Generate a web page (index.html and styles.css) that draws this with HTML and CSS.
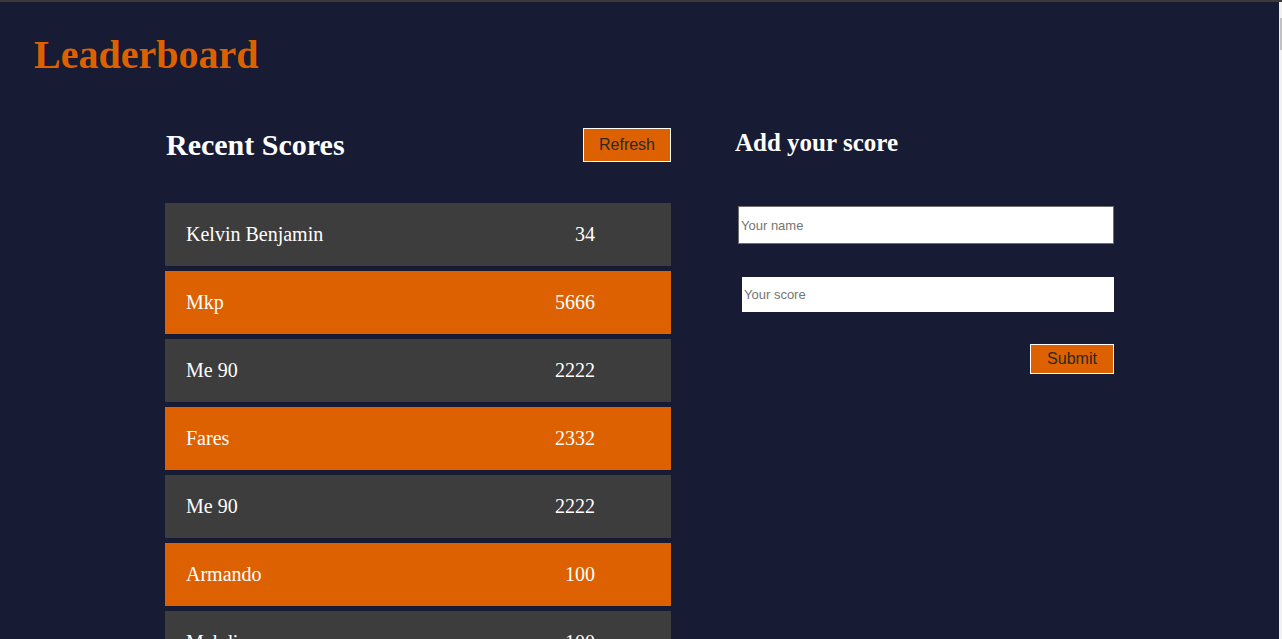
FILE: index.html
```html
<!DOCTYPE html>
<html lang="en">
<head>
<meta charset="utf-8">
<title>Leaderboard</title>
<link rel="stylesheet" href="styles.css">
</head>
<body>
<div class="page">
  <div class="content">
    <h1 class="title">Leaderboard</h1>
    <main class="board">
      <section class="scores">
        <div class="scores-head">
          <h2 class="scores-title">Recent Scores</h2>
          <button class="btn btn-refresh" type="button">Refresh</button>
        </div>
        <ul class="list">
          <li class="row row-gray"><span class="name">Kelvin Benjamin</span><span class="score">34</span></li>
          <li class="row row-orange"><span class="name">Mkp</span><span class="score">5666</span></li>
          <li class="row row-gray"><span class="name">Me 90</span><span class="score">2222</span></li>
          <li class="row row-orange"><span class="name">Fares</span><span class="score">2332</span></li>
          <li class="row row-gray"><span class="name">Me 90</span><span class="score">2222</span></li>
          <li class="row row-orange"><span class="name">Armando</span><span class="score">100</span></li>
          <li class="row row-gray"><span class="name">Mahdi</span><span class="score">100</span></li>
        </ul>
      </section>
      <section class="add">
        <h2 class="add-title">Add your score</h2>
        <form class="form">
          <input class="field field-name" type="text" placeholder="Your name">
          <input class="field field-score" type="text" placeholder="Your score">
          <div class="form-actions">
            <button class="btn btn-submit" type="button">Submit</button>
          </div>
        </form>
      </section>
    </main>
  </div>
  <div class="scrollbar"><div class="thumb"></div></div>
</div>
</body>
</html>
```

FILE: styles.css
```css
html, body {
  margin: 0;
  padding: 0;
  height: 100%;
  overflow: hidden;
}

body {
  background: #171b33;
  font-family: "Liberation Serif", "Times New Roman", serif;
  color: #ffffff;
}

.page {
  display: flex;
  height: 100%;
  border-top: 2px solid #3a3a3a;
  box-sizing: border-box;
}

.content {
  flex: 1;
  min-width: 0;
}

.scrollbar {
  width: 3px;
  background: #f1f1f1;
  display: flex;
  justify-content: flex-end;
}

.thumb {
  width: 2px;
  height: 32px;
  margin-top: 16px;
  background: #c1c1c1;
}

.title {
  margin: 30px 0 0 34px;
  font-size: 40px;
  line-height: 46px;
  font-weight: bold;
  color: #dd6100;
}

.board {
  width: 949px;
  margin: 50px auto 0;
  display: flex;
  gap: 64px;
}

.scores {
  width: 506px;
  flex-shrink: 0;
}

.scores-head {
  display: flex;
  justify-content: space-between;
  align-items: center;
  height: 34px;
}

.scores-title {
  margin: 0 0 0 1px;
  font-size: 30px;
  line-height: 34px;
  font-weight: bold;
}

.btn {
  font-family: "Liberation Sans", Arial, sans-serif;
  font-size: 16px;
  line-height: 18px;
  color: #2a2a2a;
  background: #dd6100;
  border: 1px solid #ffffff;
  border-radius: 0;
  cursor: pointer;
}

.btn-refresh {
  width: 88px;
  height: 34px;
  padding: 0;
}

.btn-submit {
  width: 84px;
  height: 30px;
  padding: 0;
}

.list {
  list-style: none;
  margin: 41px 0 0;
  padding: 0;
  display: flex;
  flex-direction: column;
  gap: 5px;
}

.row {
  height: 63px;
  display: flex;
  align-items: center;
  justify-content: space-between;
  padding: 0 76px 0 21px;
  font-size: 20px;
}

.row-gray {
  background: #3d3d3d;
}

.row-orange {
  background: #dd6100;
}

.score {
  text-align: right;
}

.add {
  width: 379px;
  flex-shrink: 0;
}

.add-title {
  margin: 1px 0 0;
  font-size: 25px;
  line-height: 28px;
  font-weight: bold;
}

.form {
  display: flex;
  flex-direction: column;
  margin-top: 49px;
}

.field {
  font-family: "Liberation Sans", Arial, sans-serif;
  font-size: 13px;
  color: #222;
  background: #ffffff;
  box-sizing: border-box;
  border-radius: 0;
  outline: none;
}

.field::placeholder {
  color: #757575;
}

.field-name {
  margin-left: 3px;
  width: 376px;
  height: 38px;
  border: 1px solid #6f6f6f;
  padding: 0 2px;
}

.field-score {
  margin: 33px 0 0 7px;
  width: 372px;
  height: 35px;
  border: none;
  padding: 0 2px;
}

.form-actions {
  display: flex;
  justify-content: flex-end;
  margin-top: 32px;
}
```
